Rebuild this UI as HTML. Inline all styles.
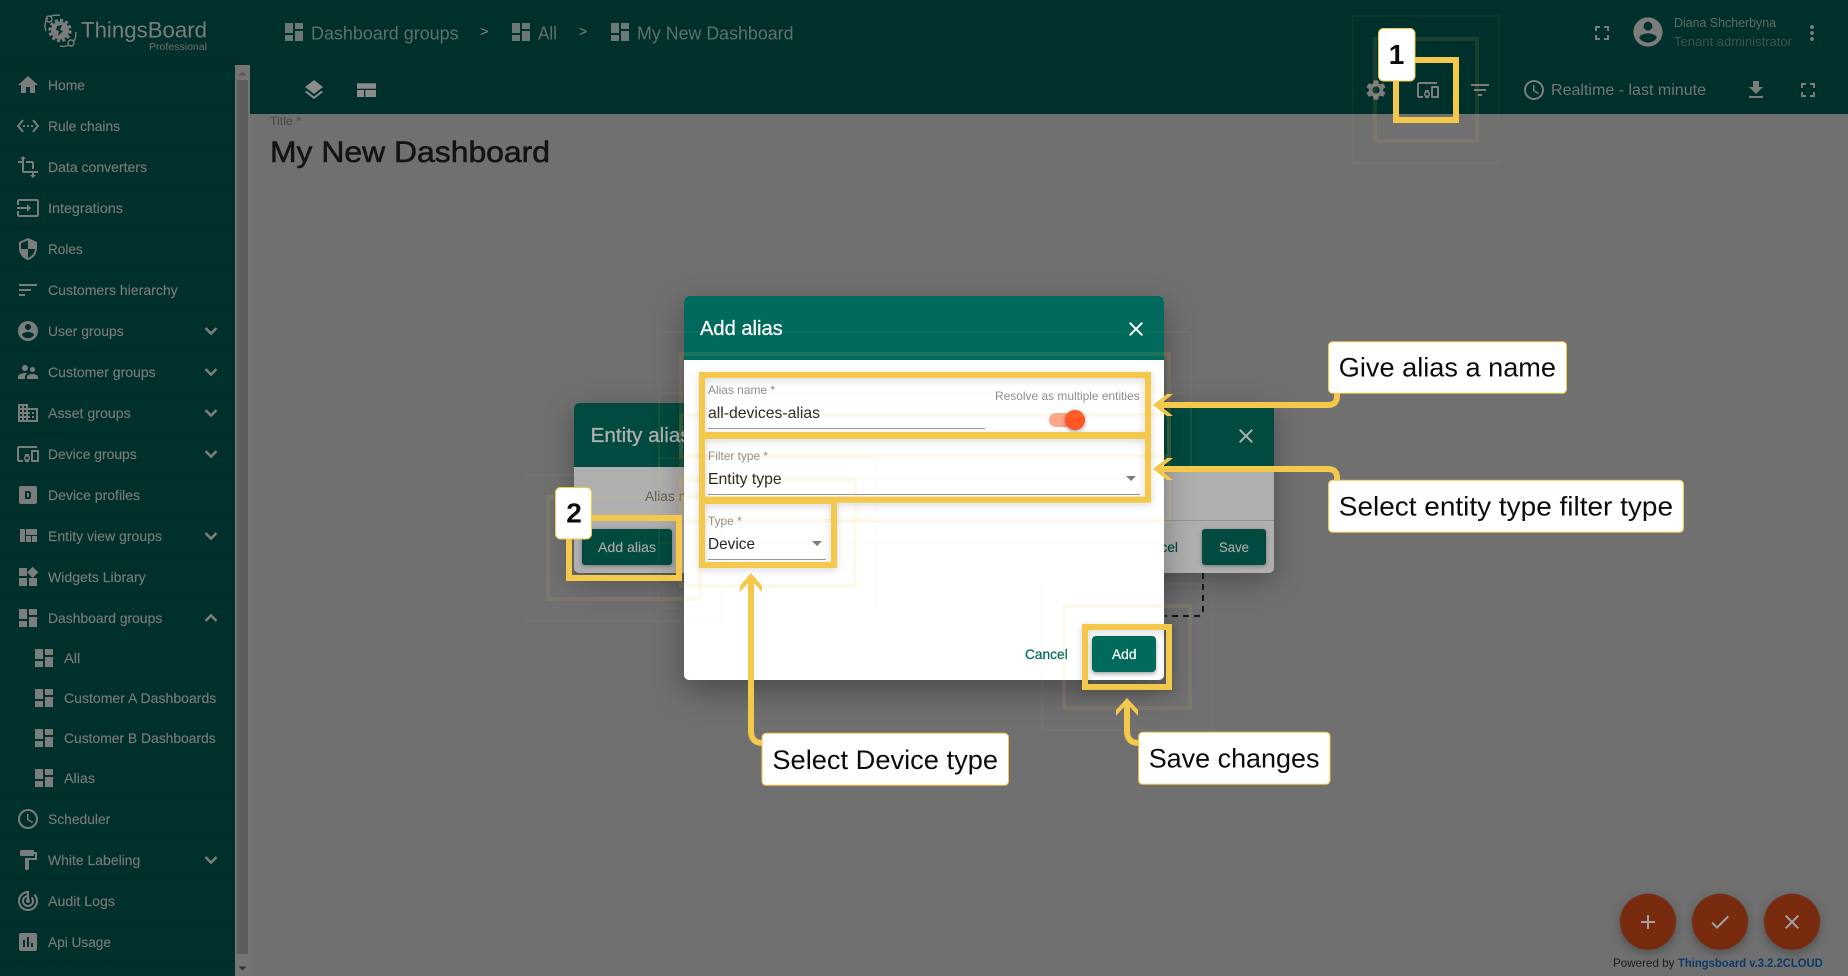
<!DOCTYPE html>
<html lang="en">
<head>
<meta charset="utf-8">
<title>ThingsBoard - Add alias</title>
<style>
html,body{margin:0;padding:0;width:1848px;height:976px;overflow:hidden;background:#707070}
svg{display:block;font-family:"Liberation Sans",Arial,sans-serif}
.s{font-size:14px;fill:#797979;stroke:#797979;stroke-width:.15}
.i{fill:#7c7c7c}
.c{font-size:27px;fill:#0c0c0c}
.call{fill:#fff;stroke:#f4c84a;stroke-width:1}
.y{fill:none;stroke:#f4c84a;stroke-width:6}
.r2{fill:none;stroke:#f4c84a;stroke-width:4;opacity:.1}
.r3{fill:none;stroke:#f4c84a;stroke-width:2;opacity:.04}
.h{fill:#f4c84a}
.l{font-size:12px;fill:#8c8c8c}
.v{font-size:16px;fill:#242424}
.bc{font-size:18px;fill:#5f706c}
.fs{filter:drop-shadow(0 2px 4px rgba(0,0,0,.16))}
.chev{fill:#7c7c7c;stroke:#7c7c7c;stroke-width:.6}
</style>
</head>
<body>
<svg width="1848" height="976" viewBox="0 0 1848 976" xmlns="http://www.w3.org/2000/svg">
<defs>
<path id="home" d="M10 20v-6h4v6h5v-8h3L12 3 2 12h3v8z"/>
<path id="code" d="M7.77 6.76L6.23 5.48.82 12l5.41 6.52 1.54-1.28L3.42 12l4.35-5.24zM7 13h2v-2H7v2zm10-2h-2v2h2v-2zm-6 2h2v-2h-2v2zm6.77-7.52l-1.54 1.28L20.58 12l-4.35 5.24 1.54 1.28L23.18 12l-5.41-6.52z"/>
<path id="transform" d="M22 18v-2H8V4h2L7 1 4 4h2v2H2v2h4v8c0 1.1.9 2 2 2h8v2h-2l3 3 3-3h-2v-2h4zM10 8h6v6h2V8c0-1.1-.9-2-2-2h-6v2z"/>
<path id="input" d="M21 3.01H3c-1.1 0-2 .9-2 2V9h2V4.99h18v14.03H3V15H1v4.01c0 1.1.9 1.98 2 1.98h18c1.1 0 2-.88 2-1.98v-14c0-1.11-.9-2-2-2zM11 16l4-4-4-4v3H1v2h10v3z"/>
<path id="security" d="M12 1L3 5v6c0 5.55 3.84 10.74 9 12 5.16-1.26 9-6.45 9-12V5l-9-4zm0 10.99h7c-.53 4.12-3.28 7.79-7 8.94V12H5V6.3l7-3.11v8.8z"/>
<path id="sort" d="M3 18h6v-2H3v2zM3 6v2h18V6H3zm0 7h12v-2H3v2z"/>
<path id="account" d="M12 2C6.48 2 2 6.48 2 12s4.48 10 10 10 10-4.48 10-10S17.52 2 12 2zm0 3c1.66 0 3 1.34 3 3s-1.34 3-3 3-3-1.34-3-3 1.34-3 3-3zm0 14.2c-2.5 0-4.71-1.28-6-3.22.03-1.99 4-3.08 6-3.08 1.99 0 5.97 1.09 6 3.08-1.29 1.94-3.5 3.22-6 3.22z"/>
<path id="super" d="M16.5 12c1.38 0 2.49-1.12 2.49-2.5S17.88 7 16.5 7C15.12 7 14 8.12 14 9.5s1.12 2.5 2.5 2.5zM9 11c1.66 0 2.99-1.34 2.99-3S10.66 5 9 5C7.34 5 6 6.34 6 8s1.34 3 3 3zm7.5 3c-1.83 0-5.5.92-5.5 2.75V19h11v-2.25c0-1.83-3.67-2.75-5.5-2.75zM9 13c-2.33 0-7 1.17-7 3.5V19h7v-2.25c0-.85.33-2.34 2.37-3.47C10.5 13.1 9.66 13 9 13z"/>
<path id="domain" d="M12 7V3H2v18h20V7H12zM6 19H4v-2h2v2zm0-4H4v-2h2v2zm0-4H4V9h2v2zm0-4H4V5h2v2zm4 12H8v-2h2v2zm0-4H8v-2h2v2zm0-4H8V9h2v2zm0-4H8V5h2v2zm10 12h-8v-2h2v-2h-2v-2h2v-2h-2V9h8v10zm-2-8h-2v2h2v-2zm0 4h-2v2h2v-2z"/>
<path id="devices" d="M3 6h18V4H3c-1.1 0-2 .9-2 2v12c0 1.1.9 2 2 2h4v-2H3V6zm10 6H9v1.78c-.61.55-1 1.33-1 2.22s.39 1.67 1 2.22V20h4v-1.78c.61-.55 1-1.34 1-2.22s-.39-1.67-1-2.22V12zm-2 5.5c-.83 0-1.5-.67-1.5-1.5s.67-1.5 1.5-1.5 1.5.67 1.5 1.5-.67 1.5-1.5 1.5zM22 8h-6c-.5 0-1 .5-1 1v10c0 .5.5 1 1 1h6c.5 0 1-.5 1-1V9c0-.5-.5-1-1-1zm-1 10h-4v-8h4v8z"/>
<path id="profile" fill-rule="evenodd" d="M19 3H5c-1.1 0-2 .9-2 2v14c0 1.1.9 2 2 2h14c1.1 0 2-.9 2-2V5c0-1.1-.9-2-2-2zM9 8h4c1 0 2 1 2 2v4c0 1-1 2-2 2H9V8zm2 2v4h2v-4h-2z"/>
<path id="quilt" d="M10 18h5v-6h-5v6zm-6 0h5V5H4v13zm12 0h5v-6h-5v6zM10 5v6h11V5H10z"/>
<path id="widgets" d="M13 13v8h8v-8h-8zM3 21h8v-8H3v8zM3 3v8h8V3H3zm13.66-1.31L11 7.34 16.66 13l5.66-5.66-5.66-5.65z"/>
<path id="dash" d="M3 13h8V3H3v10zm0 8h8v-6H3v6zm10 0h8V11h-8v10zm0-18v6h8V3h-8z"/>
<path id="clock" d="M11.99 2C6.47 2 2 6.48 2 12s4.47 10 9.99 10C17.52 22 22 17.52 22 12S17.52 2 11.99 2zM12 20c-4.42 0-8-3.58-8-8s3.58-8 8-8 8 3.58 8 8-3.58 8-8 8zm.5-13H11v6l5.25 3.15.75-1.23-4.5-2.67z"/>
<path id="paint" d="M18 4V3c0-.55-.45-1-1-1H5c-.55 0-1 .45-1 1v4c0 .55.45 1 1 1h12c.55 0 1-.45 1-1V6h1v4H9v11c0 .55.45 1 1 1h2c.55 0 1-.45 1-1v-9h8V4h-3z"/>
<path id="track" d="M19.07 4.93l-1.41 1.41C19.1 7.79 20 9.79 20 12c0 4.42-3.58 8-8 8s-8-3.58-8-8c0-4.08 3.05-7.44 7-7.93v2.02C8.16 6.57 6 9.03 6 12c0 3.31 2.69 6 6 6s6-2.69 6-6c0-1.66-.67-3.16-1.76-4.24l-1.41 1.41C15.55 9.9 16 10.9 16 12c0 2.21-1.79 4-4 4s-4-1.79-4-4c0-1.86 1.28-3.41 3-3.86v2.14c-.6.35-1 .98-1 1.72 0 1.1.9 2 2 2s2-.9 2-2c0-.74-.4-1.38-1-1.72V2h-1C6.48 2 2 6.48 2 12s4.48 10 10 10 10-4.48 10-10c0-2.76-1.12-5.26-2.93-7.07z"/>
<path id="assess" d="M19 3H5c-1.1 0-2 .9-2 2v14c0 1.1.9 2 2 2h14c1.1 0 2-.9 2-2V5c0-1.1-.9-2-2-2zM9 17H7v-7h2v7zm4 0h-2V7h2v10zm4 0h-2v-4h2v4z"/>
<path id="more" d="M16.59 8.59L12 13.17 7.41 8.59 6 10l6 6 6-6z"/>
<path id="less" d="M12 8l-6 6 1.41 1.41L12 10.83l4.59 4.58L18 14z"/>
<path id="layers" d="M11.99 18.54l-7.37-5.73L3 14.07l9 7 9-7-1.63-1.27-7.38 5.74zM12 16l7.36-5.73L21 9l-9-7-9 7 1.63 1.27L12 16z"/>
<path id="gear" d="M19.14 12.94c.04-.3.06-.61.06-.94 0-.32-.02-.64-.07-.94l2.03-1.58c.18-.14.23-.41.12-.61l-1.92-3.32c-.12-.22-.37-.29-.59-.22l-2.39.96c-.5-.38-1.03-.7-1.62-.94l-.36-2.54c-.04-.24-.24-.41-.48-.41h-3.84c-.24 0-.43.17-.47.41l-.36 2.54c-.59.24-1.13.57-1.62.94l-2.39-.96c-.22-.08-.47 0-.59.22L2.74 8.87c-.12.21-.08.47.12.61l2.03 1.58c-.05.3-.09.63-.09.94s.02.64.07.94l-2.03 1.58c-.18.14-.23.41-.12.61l1.92 3.32c.12.22.37.29.59.22l2.39-.96c.5.38 1.03.7 1.62.94l.36 2.54c.05.24.24.41.48.41h3.84c.24 0 .44-.17.47-.41l.36-2.54c.59-.24 1.13-.56 1.62-.94l2.39.96c.22.08.47 0 .59-.22l1.92-3.32c.12-.22.07-.47-.12-.61l-2.01-1.58zM12 15.6c-1.98 0-3.6-1.62-3.6-3.6s1.62-3.6 3.6-3.6 3.6 1.62 3.6 3.6-1.62 3.6-3.6 3.6z"/>
<path id="filter" d="M10 18h4v-2h-4v2zM3 6v2h18V6H3zm3 7h12v-2H6v2z"/>
<path id="down" d="M19 9h-4V3H9v6H5l7 7 7-7zM5 18v2h14v-2H5z"/>
<path id="full" d="M7 14H5v5h5v-2H7v-3zm-2-4h2V7h3V5H5v5zm12 7h-3v2h5v-5h-2v3zM14 5v2h3v3h2V5h-5z"/>
<path id="vert" d="M12 8c1.1 0 2-.9 2-2s-.9-2-2-2-2 .9-2 2 .9 2 2 2zm0 2c-1.1 0-2 .9-2 2s.9 2 2 2 2-.9 2-2-.9-2-2-2zm0 6c-1.1 0-2 .9-2 2s.9 2 2 2 2-.9 2-2-.9-2-2-2z"/>
<path id="close" d="M19 6.41L17.59 5 12 10.59 6.41 5 5 6.41 10.59 12 5 17.59 6.41 19 12 13.41 17.59 19 19 17.59 13.41 12z"/>
<path id="add" d="M19 13h-6v6h-2v-6H5v-2h6V5h2v6h6v2z"/>
<path id="check" d="M9 16.17L4.83 12l-1.42 1.41L9 19 21 7l-1.41-1.41z"/>
</defs>

<!-- page background -->
<rect width="1848" height="976" fill="#707070"/>
<rect width="1848" height="114" fill="#00302b"/>
<rect width="235" height="976" fill="#00302b"/>

<!-- scrollbar -->
<rect x="235" y="65" width="15" height="911" fill="#747474"/>
<rect x="237" y="80" width="11" height="874" fill="#5d5d5d"/>
<path d="M238.5 75.5l4-4 4 4z" fill="#585858"/>
<path d="M238.5 966.5l4 4 4-4z" fill="#333"/>

<!-- logo -->
<g fill="none" stroke="#7c7c7c" stroke-width="1.4">
<path d="M46 31C44 26 45 21 48 18M51 16C54 15 57 15 60 15"/>
<circle cx="49" cy="19" r="3"/>
<path d="M60 46C64 47 67 46 69 45M74 41C76 38 76 35 76 32"/>
<circle cx="71" cy="43" r="3"/>
<circle cx="60" cy="30.5" r="10" stroke-width="3.4" stroke-dasharray="3 2.2"/>
</g>
<circle cx="60" cy="30.5" r="9" fill="#7c7c7c"/>
<path d="M57 26l5-1-2 5 3 1-5 5 1-5-3-1z" fill="#00302b"/>
<text x="81" y="37.7" font-size="22" fill="#7c7c7c" textLength="126" lengthAdjust="spacingAndGlyphs">ThingsBoard</text>
<text x="149" y="50" font-size="10.5" fill="#707070" textLength="58" lengthAdjust="spacingAndGlyphs">Professional</text>

<!-- sidebar separators -->
<path d="M0 64h235M0 105.500h235M0 146.500h235M0 187.500h235M0 228.500h235M0 269.500h235M0 310.500h235M0 351.500h235M0 392.500h235M0 433.500h235M0 474.500h235M0 515.500h235M0 556.500h235M0 597.500h235M0 797.500h235M0 838.500h235M0 879.500h235M0 920.500h235M0 961.500h235" stroke="#002a25" stroke-width="1"/>

<!-- sidebar icons -->
<g class="i">
<use href="#home" x="16" y="73"/>
<use href="#code" x="16" y="114"/>
<use href="#transform" x="16" y="155"/>
<use href="#input" x="16" y="196"/>
<use href="#security" x="16" y="237"/>
<use href="#sort" x="16" y="278"/>
<use href="#account" x="16" y="319"/>
<use href="#super" x="16" y="360"/>
<use href="#domain" x="16" y="401"/>
<use href="#devices" x="16" y="442"/>
<use href="#profile" x="16" y="483"/>
<use href="#quilt" x="16" y="524"/>
<use href="#widgets" x="16" y="565"/>
<use href="#dash" x="16" y="606"/>
<use href="#dash" x="32" y="646"/>
<use href="#dash" x="32" y="686"/>
<use href="#dash" x="32" y="726"/>
<use href="#dash" x="32" y="766"/>
<use href="#clock" x="16" y="807"/>
<use href="#paint" x="16" y="848"/>
<use href="#track" x="16" y="889"/>
<use href="#assess" x="16" y="930"/>
</g>
<g class="chev">
<use href="#more" x="199" y="319"/>
<use href="#more" x="199" y="360"/>
<use href="#more" x="199" y="401"/>
<use href="#more" x="199" y="442"/>
<use href="#more" x="199" y="524"/>
<use href="#less" x="199" y="606"/>
<use href="#more" x="199" y="848"/>
</g>

<!-- sidebar text -->
<text class="s" x="48" y="90" textLength="37" lengthAdjust="spacingAndGlyphs">Home</text>
<text class="s" x="48" y="131" textLength="72" lengthAdjust="spacingAndGlyphs">Rule chains</text>
<text class="s" x="48" y="172" textLength="99" lengthAdjust="spacingAndGlyphs">Data converters</text>
<text class="s" x="48" y="213" textLength="75" lengthAdjust="spacingAndGlyphs">Integrations</text>
<text class="s" x="48" y="254" textLength="34.700" lengthAdjust="spacingAndGlyphs">Roles</text>
<text class="s" x="48" y="295" textLength="129.700" lengthAdjust="spacingAndGlyphs">Customers hierarchy</text>
<text class="s" x="48" y="336" textLength="75.700" lengthAdjust="spacingAndGlyphs">User groups</text>
<text class="s" x="48" y="377" textLength="107.700" lengthAdjust="spacingAndGlyphs">Customer groups</text>
<text class="s" x="48" y="418" textLength="82.700" lengthAdjust="spacingAndGlyphs">Asset groups</text>
<text class="s" x="48" y="459" textLength="88.700" lengthAdjust="spacingAndGlyphs">Device groups</text>
<text class="s" x="48" y="500" textLength="92" lengthAdjust="spacingAndGlyphs">Device profiles</text>
<text class="s" x="48" y="541" textLength="114" lengthAdjust="spacingAndGlyphs">Entity view groups</text>
<text class="s" x="48" y="582" textLength="97.700" lengthAdjust="spacingAndGlyphs">Widgets Library</text>
<text class="s" x="48" y="623" textLength="114.300" lengthAdjust="spacingAndGlyphs">Dashboard groups</text>
<text class="s" x="64" y="663" textLength="16.300" lengthAdjust="spacingAndGlyphs">All</text>
<text class="s" x="64" y="703" textLength="152.300" lengthAdjust="spacingAndGlyphs">Customer A Dashboards</text>
<text class="s" x="64" y="743" textLength="151.700" lengthAdjust="spacingAndGlyphs">Customer B Dashboards</text>
<text class="s" x="64" y="783" textLength="31" lengthAdjust="spacingAndGlyphs">Alias</text>
<text class="s" x="48" y="824" textLength="62.300" lengthAdjust="spacingAndGlyphs">Scheduler</text>
<text class="s" x="48" y="865" textLength="92.300" lengthAdjust="spacingAndGlyphs">White Labeling</text>
<text class="s" x="48" y="906" textLength="67" lengthAdjust="spacingAndGlyphs">Audit Logs</text>
<text class="s" x="48" y="947" textLength="63" lengthAdjust="spacingAndGlyphs">Api Usage</text>

<!-- breadcrumb -->
<g fill="#6a7876">
<use href="#dash" x="282" y="20"/>
<use href="#dash" x="509" y="20"/>
<use href="#dash" x="608" y="20"/>
</g>
<text class="bc" x="311" y="39.500" textLength="147.600" lengthAdjust="spacingAndGlyphs">Dashboard groups</text>
<text x="480" y="36" font-size="14" fill="#8a8a8a" textLength="8.500" lengthAdjust="spacingAndGlyphs">&gt;</text>
<text class="bc" x="538" y="39.500" textLength="19" lengthAdjust="spacingAndGlyphs">All</text>
<text x="579" y="36" font-size="14" fill="#8a8a8a" textLength="8" lengthAdjust="spacingAndGlyphs">&gt;</text>
<text class="bc" x="637" y="39.500" textLength="156.500" lengthAdjust="spacingAndGlyphs">My New Dashboard</text>

<!-- toolbar left -->
<use href="#layers" x="302" y="78" fill="#8c8c8c"/>
<g fill="#8c8c8c">
<rect x="357" y="83.300" width="19" height="5.400"/>
<rect x="357" y="90" width="7" height="7"/>
<rect x="365.300" y="90" width="10.700" height="7"/>
</g>

<!-- title -->
<text x="270" y="125" font-size="12" fill="#474747" textLength="31" lengthAdjust="spacingAndGlyphs">Title *</text>
<text x="270" y="162" font-size="30" fill="#141414" stroke="#141414" stroke-width=".6" textLength="280" lengthAdjust="spacingAndGlyphs">My New Dashboard</text>

<!-- header right -->
<g class="i">
<use href="#full" x="1590" y="21"/>
<use href="#vert" x="1800" y="21"/>
<use href="#gear" x="1364" y="78"/>
<use href="#devices" x="1416" y="78"/>
<use href="#filter" x="1468" y="78"/>
<use href="#clock" x="1522" y="78"/>
<use href="#down" x="1744" y="78"/>
<use href="#full" x="1796" y="78"/>
</g>
<use href="#account" transform="translate(1630.500 14.500) scale(1.46)" fill="#7c7c7c"/>
<text x="1674" y="27" font-size="12.500" fill="#5e6c69" textLength="102" lengthAdjust="spacingAndGlyphs">Diana Shcherbyna</text>
<text x="1674" y="46" font-size="12.500" fill="#3f5450" textLength="118" lengthAdjust="spacingAndGlyphs">Tenant administrator</text>
<text x="1551" y="95" font-size="16" fill="#767676" textLength="155" lengthAdjust="spacingAndGlyphs">Realtime - last minute</text>

<!-- Entity aliases dialog behind -->
<g style="filter:drop-shadow(0 8px 14px rgba(0,0,0,.3))">
<rect x="574" y="403" width="700" height="170" rx="5" fill="#afafaf"/>
</g>
<path d="M574 467V408a5 5 0 0 1 5-5H1269a5 5 0 0 1 5 5V467z" fill="#004a3f"/>
<text x="590.600" y="442" font-size="20" fill="#b0b0b0" stroke="#b0b0b0" stroke-width=".3" textLength="122" lengthAdjust="spacingAndGlyphs">Entity aliases</text>
<use href="#close" x="1234" y="424" fill="#b0b0b0"/>
<text x="645" y="501" font-size="14" fill="#5a5a5a" textLength="68" lengthAdjust="spacingAndGlyphs">Alias name</text>
<rect x="574" y="520" width="700" height="1" fill="#949494"/>
<rect x="582" y="529" width="90" height="36" rx="3" fill="#004a3f" style="filter:drop-shadow(0 1px 2px rgba(0,0,0,.35))"/>
<text x="598" y="552" font-size="14" fill="#a8a8a8" stroke="#a8a8a8" stroke-width=".15" textLength="58" lengthAdjust="spacingAndGlyphs">Add alias</text>
<text x="1135" y="552" font-size="14" fill="#004a3f" stroke="#004a3f" stroke-width=".2" textLength="43" lengthAdjust="spacingAndGlyphs">Cancel</text>
<rect x="1202" y="529" width="64" height="36" rx="3" fill="#004a3f" style="filter:drop-shadow(0 1px 2px rgba(0,0,0,.35))"/>
<text x="1219" y="552" font-size="14" fill="#a8a8a8" stroke="#a8a8a8" stroke-width=".15" textLength="30" lengthAdjust="spacingAndGlyphs">Save</text>
<path d="M1203 573V611Q1203 616 1198 616H1165" fill="none" stroke="#161616" stroke-width="2" stroke-dasharray="6 5"/>

<!-- Add alias dialog -->
<g style="filter:drop-shadow(0 11px 15px rgba(0,0,0,.33))">
<rect x="684" y="296" width="480" height="384" rx="5" fill="#fff"/>
</g>
<path d="M684 360V301a5 5 0 0 1 5-5H1159a5 5 0 0 1 5 5V360z" fill="#006b5c"/>
<text x="700" y="335" font-size="20" fill="#fff" stroke="#fff" stroke-width=".25" textLength="82.700" lengthAdjust="spacingAndGlyphs">Add alias</text>
<use href="#close" x="1124" y="317" fill="#fff"/>

<text class="l" x="708" y="394" textLength="67" lengthAdjust="spacingAndGlyphs">Alias name *</text>
<text class="v" x="708" y="418" textLength="112" lengthAdjust="spacingAndGlyphs">all-devices-alias</text>
<rect x="708" y="428" width="277" height="1" fill="#9c9c9c"/>
<text class="l" x="995" y="400" textLength="144.700" lengthAdjust="spacingAndGlyphs">Resolve as multiple entities</text>
<rect x="1049" y="413" width="36" height="14" rx="7" fill="#ffa58a"/>
<circle cx="1075" cy="420" r="10" fill="#ff5722" style="filter:drop-shadow(0 1px 2px rgba(0,0,0,.4))"/>

<text class="l" x="708" y="460" textLength="60" lengthAdjust="spacingAndGlyphs">Filter type *</text>
<text class="v" x="708" y="484" textLength="73.700" lengthAdjust="spacingAndGlyphs">Entity type</text>
<rect x="708" y="494" width="432" height="1" fill="#9c9c9c"/>
<path d="M1126 476h10l-5 5z" fill="#7a7a7a"/>

<text class="l" x="708" y="525" textLength="33.700" lengthAdjust="spacingAndGlyphs">Type *</text>
<text class="v" x="708" y="549" textLength="47" lengthAdjust="spacingAndGlyphs">Device</text>
<rect x="708" y="559" width="118" height="1" fill="#9c9c9c"/>
<path d="M812 541h10l-5 5z" fill="#7a7a7a"/>

<text x="1025" y="659" font-size="14" fill="#006b5c" stroke="#006b5c" stroke-width=".25" textLength="42.700" lengthAdjust="spacingAndGlyphs">Cancel</text>
<rect x="1092" y="636" width="64" height="36" rx="4" fill="#006b5c" style="filter:drop-shadow(0 2px 2px rgba(0,0,0,.35))"/>
<text x="1112" y="659" font-size="14" fill="#fff" stroke="#fff" stroke-width=".2" textLength="24.500" lengthAdjust="spacingAndGlyphs">Add</text>

<!-- FABs -->
<g style="filter:drop-shadow(0 3px 5px rgba(0,0,0,.3))" fill="#792b10">
<circle cx="1648" cy="921.700" r="28"/>
<circle cx="1720" cy="921.700" r="28"/>
<circle cx="1792" cy="921.700" r="28"/>
</g>
<g fill="#a3a3a3">
<use href="#add" x="1636" y="910"/>
<use href="#check" x="1708" y="910"/>
<use href="#close" x="1780" y="910"/>
</g>
<text x="1613" y="967" font-size="12" fill="#1d1d1d" textLength="61.500" lengthAdjust="spacingAndGlyphs">Powered by</text>
<text x="1678" y="967" font-size="12" fill="#0c3a68" font-weight="bold" textLength="144.700" lengthAdjust="spacingAndGlyphs">Thingsboard v.3.2.2CLOUD</text>

<!-- ghost rings -->
<rect class="r2" x="681" y="354" width="488" height="102"/>
<rect class="r3" x="659" y="332" width="532" height="146"/>
<rect class="r2" x="681" y="415" width="488" height="106"/>
<rect class="r3" x="659" y="393" width="532" height="150"/>
<rect class="r2" x="681" y="480" width="174" height="106"/>
<rect class="r3" x="659" y="458" width="218" height="150"/>
<rect class="r2" x="548" y="497" width="152" height="102"/>
<rect class="r3" x="526" y="475" width="196" height="146"/>
<rect class="r2" x="1375" y="39" width="102" height="102"/>
<rect class="r3" x="1353" y="16" width="146" height="147"/>
<rect class="r2" x="1064" y="606" width="126" height="102"/>
<rect class="r3" x="1042" y="584" width="170" height="146"/>

<!-- yellow frames -->
<rect class="y" x="1396" y="60" width="60" height="60"/>
<rect class="y" x="569" y="518" width="110" height="60"/>
<g class="fs">
<rect class="y" x="702" y="375" width="446" height="60"/>
<rect class="y" x="702" y="436" width="446" height="63.700"/>
<rect class="y" x="702" y="501" width="132" height="64"/>
<rect class="y" x="1085" y="627" width="84" height="60"/>
</g>

<!-- arrows -->
<g fill="none" stroke="#f4c84a" stroke-width="6">
<path d="M1337 393V396Q1337 405 1328 405H1160"/>
<path d="M1337 481V478Q1337 469 1328 469H1160"/>
<path d="M751 580V731Q751 743 763 743"/>
<path d="M1127 705V731Q1127 743 1139 743"/>
</g>
<polygon class="h" points="1153,405 1167,394 1173,394 1163,402 1163,408 1173,416 1167,416"/>
<polygon class="h" points="1153,469 1167,458 1173,458 1163,466 1163,472 1173,480 1167,480"/>
<polygon class="h" points="751,573 740,586 740,592 748,583 754,583 762,592 762,586"/>
<polygon class="h" points="1127,698 1116,710 1116,716 1124,707 1130,707 1138,716 1138,710"/>

<!-- callouts -->
<rect class="call" x="1328.500" y="341.700" width="238" height="51.600" rx="4"/>
<text class="c" x="1338.800" y="376.700" textLength="217.200" lengthAdjust="spacingAndGlyphs">Give alias a name</text>
<rect class="call" x="1328.500" y="480.300" width="355" height="52" rx="4"/>
<text class="c" x="1338.800" y="515.500" textLength="334.200" lengthAdjust="spacingAndGlyphs">Select entity type filter type</text>
<rect class="call" x="762" y="733.300" width="246.500" height="52" rx="4"/>
<text class="c" x="772.400" y="769" textLength="225.600" lengthAdjust="spacingAndGlyphs">Select Device type</text>
<rect class="call" x="1138.600" y="732.300" width="191.400" height="52" rx="4"/>
<text class="c" x="1148.700" y="767.700" textLength="170.800" lengthAdjust="spacingAndGlyphs">Save changes</text>

<!-- number badges -->
<rect class="call" x="1378.500" y="28.500" width="36.500" height="52.500" rx="5"/>
<text x="1396.500" y="64" font-size="28" font-weight="bold" fill="#0c0c0c" text-anchor="middle">1</text>
<rect class="call" x="555.500" y="487.500" width="36" height="51.500" rx="5"/>
<text x="574" y="522.700" font-size="28" font-weight="bold" fill="#0c0c0c" text-anchor="middle">2</text>
</svg>
</body>
</html>
